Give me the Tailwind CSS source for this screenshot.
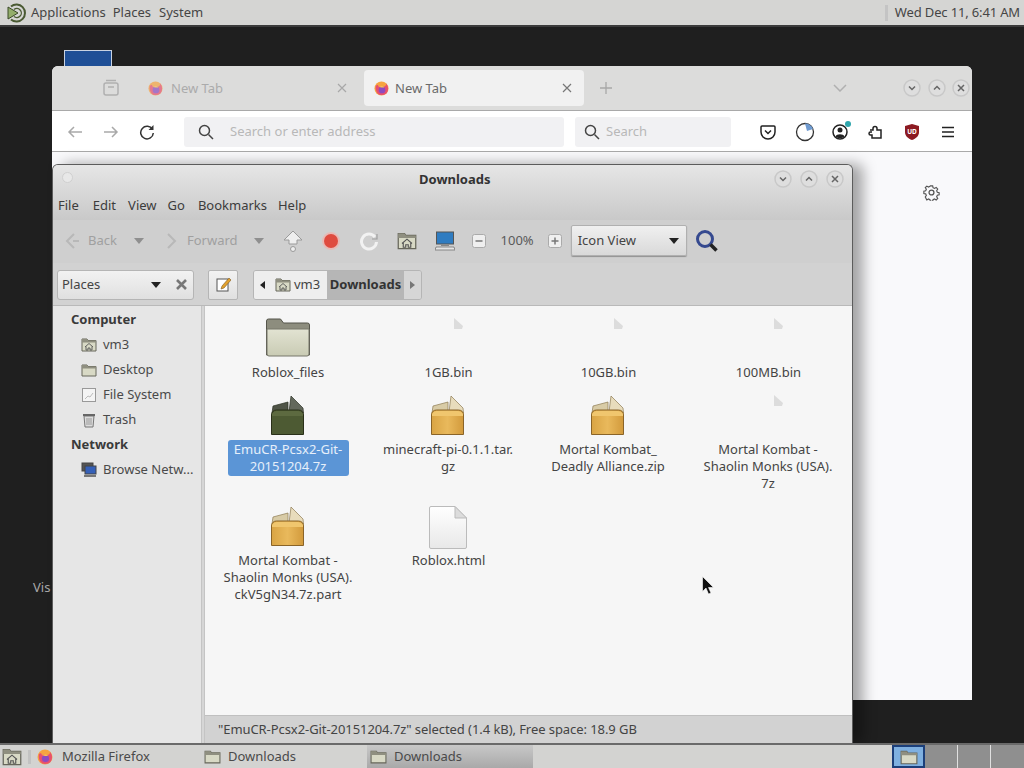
<!DOCTYPE html>
<html lang="en">
<head>
    <meta charset="UTF-8">
    <title>Downloads</title>
    <script src="https://cdn.jsdelivr.net/npm/@tailwindcss/browser@4"></script>
</head>
<body class="relative w-[1024px] h-[768px] overflow-hidden bg-[#1f1f1f] font-['Noto_Sans',sans-serif] text-[13px] text-[#3c3c3c]">

    <!-- shared icons -->
    <svg class="absolute w-0 h-0">
        <defs>
            <linearGradient id="boxfill" x1="0" y1="0" x2="1" y2="0"><stop offset="0" stop-color="#d9a444"/><stop offset=".5" stop-color="#e9b95c"/><stop offset="1" stop-color="#d29a3c"/></linearGradient>
            <linearGradient id="folderfill" x1="0" y1="0" x2="0" y2="1"><stop offset="0" stop-color="#e2e3d2"/><stop offset="1" stop-color="#c9cbb4"/></linearGradient>
            <linearGradient id="docfill" x1="0" y1="0" x2="0" y2="1"><stop offset="0" stop-color="#ffffff"/><stop offset="1" stop-color="#e8e8e8"/></linearGradient>
        </defs>
        <symbol id="fox" viewBox="0 0 16 16">
            <circle cx="8" cy="8" r="7.5" fill="#f6a440"/>
            <path d="M2 5c-1 4 1 10 6 10s7-3 7-7c0-2-1-4-2-5 0 2-1 3-3 3-2-1-4-1-5 0L4 4z" fill="#e8506e"/>
            <circle cx="8.5" cy="9.5" r="3.6" fill="#8d4bc0"/>
            <path d="M5 6c2-1 5-1 6 1-2 0-4 0-6-1z" fill="#f7c14d"/>
        </symbol>
        <symbol id="package" viewBox="0 0 33 40">
            <path d="M2 11l15-4v11H1z" fill="#d8cba6" stroke="#8d7a52" stroke-width=".7"/>
            <path d="M18 17l2-16 12 12 .5 5z" fill="#e8dcbc" stroke="#8d7a52" stroke-width=".7"/>
            <path d="M.5 20c0-3 2-5 5-5h22c3 0 5 2 5 5v19.500H.5z" fill="url(#boxfill)" stroke="#8a6428"/>
            <path d="M1 19c1-2 3-3 5-3h21c2 0 4 1 5 3v2H1z" fill="#f0c66e"/>
        </symbol>
        <symbol id="package-dark" viewBox="0 0 33 40">
            <path d="M2 11l15-4v11H1z" fill="#4f5447" stroke="#2b3024" stroke-width=".7"/>
            <path d="M18 17l2-16 12 12 .5 5z" fill="#63685c" stroke="#2b3024" stroke-width=".7"/>
            <path d="M.5 20c0-3 2-5 5-5h22c3 0 5 2 5 5v19.500H.5z" fill="#4d5a33" stroke="#2a3019"/>
            <path d="M1 19c1-2 3-3 5-3h21c2 0 4 1 5 3v2H1z" fill="#5d6a40"/>
        </symbol>
        <symbol id="blank" viewBox="0 0 10 11">
            <path d="M1 0l9 8-1 3H1z" fill="#dcdcdc"/>
        </symbol>
        <symbol id="smallfolder" viewBox="0 0 16 16">
            <path d="M1 3h5l1 1.500h8V14H1z" fill="#d8d9c5" stroke="#66665a"/>
            <path d="M1 3h5l1 1.500h8v2H1z" fill="#8f8f80"/>
        </symbol>
        <symbol id="homefolder" viewBox="0 0 16 16">
            <path d="M1 2h5l1 1.500h8V14H1z" fill="#d8d9c5" stroke="#66665a"/>
            <path d="M1 2h5l1 1.500h8v2H1z" fill="#8f8f80"/>
            <path d="M4 10l4-3.500 4 3.500M5 9.500V13h2v-2h2v2h2V9.500" fill="none" stroke="#555" stroke-width=".9"/>
        </symbol>
        <symbol id="winmin" viewBox="0 0 18 18">
            <circle cx="9" cy="9" r="8" fill="#dedede" stroke="#c8c8c8" stroke-width="1.500"/>
            <path d="M6 7.500l3 3 3-3" fill="none" stroke="#666" stroke-width="1.500"/>
        </symbol>
        <symbol id="winmax" viewBox="0 0 18 18">
            <circle cx="9" cy="9" r="8" fill="#dedede" stroke="#c8c8c8" stroke-width="1.500"/>
            <path d="M6 10.500l3-3 3 3" fill="none" stroke="#666" stroke-width="1.500"/>
        </symbol>
        <symbol id="winclose" viewBox="0 0 18 18">
            <circle cx="9" cy="9" r="8" fill="#dedede" stroke="#c8c8c8" stroke-width="1.500"/>
            <path d="M6 6l6 6M12 6l-6 6" fill="none" stroke="#666" stroke-width="1.500"/>
        </symbol>
    </svg>

    <!-- top panel -->
    <div class="absolute top-0 left-0 w-full h-[27px] bg-[#d5d5d3] border-b-2 border-[#3b3b3b] flex items-center text-[13px] text-[#454545]">
        <svg class="ml-[6px] w-[20px] h-[20px]" viewBox="0 0 20 20" fill="none">
            <path d="M5 3.500a8.500 8.500 0 1 1 0 13" stroke="#4a5a32" stroke-width="2"/>
            <path d="M8 6.500a4.500 4.500 0 1 1 0 7" stroke="#4a5a32" stroke-width="1.300"/>
            <path d="M2 4l10 6-10 6z" fill="#93ad6b" stroke="#3c4a28"/>
        </svg>
        <span class="ml-[5px]">Applications</span>
        <span class="ml-[7px]">Places</span>
        <span class="ml-[8px]">System</span>
        <div class="ml-auto mr-[7px] w-[3px] h-[16px] bg-[#c4c4c4]"></div>
        <span class="mr-[4px] tracking-[-0.15px]">Wed Dec 11, 6:41 AM</span>
    </div>

    <!-- desktop leftovers -->
    <div class="absolute left-[64px] top-[50px] w-[48px] h-[20px] bg-[#1f4f96] border border-[#c9d3e2]"></div>
    <span class="absolute left-[33px] top-[578px] text-[#a8a8a8]">Vis</span>

    <!-- firefox window -->
    <div class="absolute left-[52px] top-[66px] w-[920px] h-[634px] flex flex-col rounded-t-md overflow-hidden bg-[#f9f9fb]">
        <div class="h-[45px] shrink-0 bg-[#dcdcdb] border-b border-[#a9a9a9] flex items-center">
            <svg class="ml-[50px] w-[18px] h-[18px]" viewBox="0 0 18 18" fill="none" stroke="#b0b0b0" stroke-width="1.500">
                <rect x="2" y="4" width="14" height="12" rx="2"/><path d="M4 1.500h10M6 8h6"/>
            </svg>
            <div class="ml-[18px] w-[220px] h-[36px] flex items-center px-[10px]">
                <svg class="w-[15px] h-[15px] opacity-70"><use href="#fox"/></svg>
                <span class="ml-[8px] mt-[1px] text-[#ababab]">New Tab</span>
                <svg class="ml-auto mr-[1px] w-[10px] h-[10px]" viewBox="0 0 10 10" stroke="#a8a8a8" stroke-width="1.200"><path d="M1 1l8 8M9 1l-8 8"/></svg>
            </div>
            <div class="ml-[6px] w-[220px] h-[36px] bg-[#f1f1f1] rounded-[4px] flex items-center pl-[10px] pr-[12px]">
                <svg class="w-[15px] h-[15px]"><use href="#fox"/></svg>
                <span class="ml-[6px] mt-[1px] text-[#6a6a6a]">New Tab</span>
                <svg class="ml-auto w-[10px] h-[10px]" viewBox="0 0 10 10" stroke="#777" stroke-width="1.200"><path d="M1 1l8 8M9 1l-8 8"/></svg>
            </div>
            <svg class="ml-[16px] w-[12px] h-[12px]" viewBox="0 0 12 12" stroke="#a8a8a8" stroke-width="1.300"><path d="M6 0v12M0 6h12"/></svg>
            <svg class="ml-[221px] w-[14px] h-[8px]" viewBox="0 0 14 8" fill="none" stroke="#b0b0b0" stroke-width="1.500"><path d="M1 1l6 6 6-6"/></svg>
            <svg class="ml-[56px] w-[18px] h-[18px]"><use href="#winmin"/></svg>
            <svg class="ml-[7px] w-[18px] h-[18px]"><use href="#winmax"/></svg>
            <svg class="ml-[6px] w-[18px] h-[18px]"><use href="#winclose"/></svg>
        </div>
        <div class="h-[41px] shrink-0 bg-white border-b border-[#a9a9a9] flex items-center pt-[1px]">
            <svg class="ml-[15px] w-[16px] h-[14px]" viewBox="0 0 16 14" fill="none" stroke="#a9a9a9" stroke-width="1.500"><path d="M15 7H2M7 2L2 7l5 5"/></svg>
            <svg class="ml-[20px] w-[16px] h-[14px]" viewBox="0 0 16 14" fill="none" stroke="#a9a9a9" stroke-width="1.500"><path d="M1 7h13M9 2l5 5-5 5"/></svg>
            <svg class="ml-[20px] w-[16px] h-[16px]" viewBox="0 0 16 16" fill="none" stroke="#333" stroke-width="1.500"><path d="M13.500 5.500A6.300 6.300 0 1 0 14.300 9"/><path d="M14.500 1v5h-5" fill="#333" stroke="none"/></svg>
            <div class="ml-[29px] w-[380px] h-[30px] bg-[#f1f1f3] flex items-center rounded-[3px]">
                <svg class="ml-[14px] w-[16px] h-[16px]" viewBox="0 0 16 16" fill="none" stroke="#444" stroke-width="1.500"><circle cx="6.500" cy="6.500" r="5"/><path d="M10.500 10.500l4.500 4.500"/></svg>
                <span class="ml-[16px] text-[#b8b8b8]">Search or enter address</span>
            </div>
            <div class="ml-[11px] w-[156px] h-[30px] bg-[#f1f1f3] flex items-center rounded-[3px]">
                <svg class="ml-[9px] w-[16px] h-[16px]" viewBox="0 0 16 16" fill="none" stroke="#444" stroke-width="1.500"><circle cx="6.500" cy="6.500" r="5"/><path d="M10.500 10.500l4.500 4.500"/></svg>
                <span class="ml-[6px] text-[#b8b8b8]">Search</span>
            </div>
            <svg class="ml-[29px] w-[16px] h-[16px]" viewBox="0 0 16 16" fill="none" stroke="#222" stroke-width="1.500"><path d="M2 2h12a1 1 0 0 1 1 1v5a7 7 0 0 1-14 0V3a1 1 0 0 1 1-1z"/><path d="M5 6.500l3 3 3-3"/></svg>
            <svg class="ml-[19px] w-[20px] h-[20px]" viewBox="0 0 20 20"><circle cx="10" cy="10" r="8.500" fill="#fff" stroke="#333" stroke-width="1.300"/><path d="M10 1.500A8.500 8.500 0 0 1 18 7l-6 2z" fill="#6f9bd1"/></svg>
            <div class="relative ml-[17px] w-[16px] h-[16px]">
                <svg class="w-[16px] h-[16px]" viewBox="0 0 16 16"><circle cx="8" cy="8" r="7" fill="#fff" stroke="#222" stroke-width="1.500"/><circle cx="8" cy="6" r="2.500" fill="#222"/><path d="M3.500 12.500c1-3 8-3 9 0-2 2-7 2-9 0z" fill="#222"/></svg>
                <div class="absolute top-[-3px] right-[-3px] w-[6px] h-[6px] rounded-full bg-[#2fa6ad]"></div>
            </div>
            <svg class="ml-[20px] w-[16px] h-[16px]" viewBox="0 0 16 16" fill="none" stroke="#222" stroke-width="1.500"><path d="M2 6h3V4.500a2 2 0 1 1 4 0V6h4v8H4v-3H2.500a1.500 1.500 0 0 1 0-3H4"/></svg>
            <svg class="ml-[20px] w-[16px] h-[16px]" viewBox="0 0 16 16"><path d="M8 0l7 2v6c0 4-3 6.500-7 8-4-1.500-7-4-7-8V2z" fill="#8c1a22"/><text x="8" y="10" text-anchor="middle" font-size="6.500" font-weight="700" fill="#fff">UD</text></svg>
            <svg class="ml-[22px] w-[12px] h-[12px]" viewBox="0 0 12 12" stroke="#222" stroke-width="1.400"><path d="M0 1.500h12M0 6h12M0 10.500h12"/></svg>
        </div>
        <div class="flex-1 flex justify-end pt-[32px] pr-[32px]">
            <svg class="w-[17px] h-[17px]" viewBox="0 0 16 16" fill="none" stroke="#555" stroke-width="1.200"><circle cx="8" cy="8" r="2.300"/><path d="M6.800 1h2.400l.4 2 1.500.7 1.800-1 1.600 1.700-1.100 1.700.7 1.600 1.900.4v2.400l-1.900.4-.7 1.600 1.100 1.700-1.600 1.600-1.800-1-1.500.7-.4 1.800H6.800l-.4-1.800-1.500-.7-1.800 1L1.500 12.700l1.100-1.700-.7-1.600L0 9V6.600l1.900-.4.700-1.600-1.100-1.700L3.100 1.300l1.800 1 1.500-.7z" transform="translate(.8 .8) scale(.9)"/></svg>
        </div>
    </div>

    <!-- file manager window -->
    <div class="absolute left-[52px] top-[164px] w-[801px] h-[579px] flex flex-col rounded-t-md overflow-hidden border border-[#5c5c5c] border-b-0 bg-[#d2d2d2] shadow-[10px_0_14px_rgba(0,0,0,0.35)]">
        <div class="h-[55px] shrink-0 bg-gradient-to-b from-[#e6e6e6] to-[#c9c9c9] flex flex-col">
            <div class="h-[28px] flex items-center relative">
                <div class="ml-[9px] mb-[4px] w-[11px] h-[11px] rounded-full bg-[#e8e8e8] border border-[#d0d0d0]"></div>
                <span class="absolute left-[366px] top-[5px] font-bold text-[#333]">Downloads</span>
                <svg class="ml-auto w-[18px] h-[18px]"><use href="#winmin"/></svg>
                <svg class="ml-[8px] w-[18px] h-[18px]"><use href="#winmax"/></svg>
                <svg class="ml-[8px] mr-[8px] w-[18px] h-[18px]"><use href="#winclose"/></svg>
            </div>
            <div class="flex h-[26px] items-center pl-[5px] gap-[12px] text-[#3c3c3c]">
                <span>File</span><span class="ml-[2px]">Edit</span><span>View</span><span class="ml-[-1px]">Go</span><span class="ml-[1px]">Bookmarks</span><span class="ml-[-1px]">Help</span>
            </div>
        </div>
        <div class="h-[43px] shrink-0 bg-[#cfcfcf] flex items-center pb-[2px] text-[#a0a0a0]">
            <svg class="ml-[12px] w-[16px] h-[18px]" viewBox="0 0 16 18" fill="none" stroke="#b8b8b8" stroke-width="2"><path d="M9 2L2 9l7 7M8 9h6"/></svg>
            <span class="ml-[7px]">Back</span>
            <div class="ml-[17px] w-0 h-0 border-x-[5px] border-x-transparent border-t-[6px] border-t-[#8f8f8f]"></div>
            <svg class="ml-[20px] w-[14px] h-[18px]" viewBox="0 0 14 18" fill="none" stroke="#b8b8b8" stroke-width="2"><path d="M4 2l7 7-7 7"/></svg>
            <span class="ml-[9px]">Forward</span>
            <div class="ml-[16px] w-0 h-0 border-x-[5px] border-x-transparent border-t-[6px] border-t-[#8f8f8f]"></div>
            <svg class="ml-[19px] w-[20px] h-[24px]" viewBox="0 0 20 24" fill="#eee" stroke="#9a9a9a"><path d="M10 2l9 9h-5v4H6v-4H1z"/><circle cx="10" cy="20" r="2.500"/></svg>
            <svg class="ml-[18px] w-[20px] h-[20px]" viewBox="0 0 20 20"><circle cx="10" cy="10" r="9" fill="#e9b9b5"/><circle cx="10" cy="10" r="7" fill="#df4b3f"/></svg>
            <svg class="ml-[18px] w-[20px] h-[20px]" viewBox="0 0 20 20" fill="none" stroke="#f2f2f2" stroke-width="3"><path d="M16 6a7.500 7.500 0 1 0 1.500 5"/><path d="M18 3v5h-5" stroke="#9f9f9f" stroke-width="1.200"/></svg>
            <svg class="ml-[18px] w-[20px] h-[20px]"><use href="#homefolder"/></svg>
            <svg class="ml-[18px] w-[20px] h-[20px]" viewBox="0 0 20 20"><rect x="1.500" y="1" width="17" height="12" fill="#2f7cc1" stroke="#555"/><path d="M6 13.500h8v1.500H6z" fill="#888"/><path d="M1 16h18l1 3H0z" fill="#e4e4e4" stroke="#666" stroke-width=".7"/></svg>
            <svg class="ml-[17px] w-[14px] h-[14px]" viewBox="0 0 14 14"><rect x=".5" y=".5" width="13" height="13" rx="2" fill="#efefef" stroke="#aaa"/><path d="M3.500 7h7" stroke="#777" stroke-width="1.500"/></svg>
            <span class="ml-[15px] text-[#5a5a5a]">100%</span>
            <svg class="ml-[14px] w-[14px] h-[14px]" viewBox="0 0 14 14"><rect x=".5" y=".5" width="13" height="13" rx="2" fill="#efefef" stroke="#aaa"/><path d="M3.500 7h7M7 3.500v7" stroke="#777" stroke-width="1.500"/></svg>
            <div class="ml-[9px] w-[116px] h-[31px] bg-gradient-to-b from-[#f0f0f0] to-[#d9d9d9] border border-[#b0b0b0] rounded-[2px] flex items-center pl-[6px] text-[#444] shadow-[0_1px_1px_rgba(0,0,0,0.3)]">
                <span>Icon View</span>
                <div class="ml-auto mr-[7px] w-0 h-0 border-x-[5px] border-x-transparent border-t-[6px] border-t-[#222]"></div>
            </div>
            <svg class="ml-[8px] w-[24px] h-[24px]" viewBox="0 0 24 24" fill="none"><circle cx="10" cy="10" r="7.500" stroke="#35498f" stroke-width="3"/><path d="M15.500 15.500l6 6" stroke="#222" stroke-width="3.500"/></svg>
        </div>
        <div class="h-[43px] shrink-0 bg-[#d2d2d2] border-b border-[#b9b9b9] flex items-center pt-[1px]">
            <div class="ml-[4px] w-[137px] h-[30px] bg-gradient-to-b from-[#f2f2f2] to-[#e0e0e0] border border-[#b5b5b5] rounded-[3px] flex items-center pl-[4px] text-[#444]">
                <span>Places</span>
                <div class="ml-[51px] w-0 h-0 border-x-[5px] border-x-transparent border-t-[6px] border-t-[#222]"></div>
                <svg class="ml-[15px] w-[11px] h-[11px]" viewBox="0 0 11 11" stroke="#777" stroke-width="2.600"><path d="M1 1l9 9M10 1l-9 9"/></svg>
            </div>
            <div class="ml-[14px] w-[30px] h-[30px] bg-gradient-to-b from-[#f2f2f2] to-[#e0e0e0] border border-[#b5b5b5] rounded-[2px] flex items-center justify-center">
                <svg class="w-[15px] h-[15px]" viewBox="0 0 15 15"><rect x="1" y="2" width="11" height="12" fill="#fff" stroke="#555"/><path d="M13 1L6 9l-1 3 3-1 7-8z" fill="#e2a12e" stroke="#7d5a22" stroke-width=".6"/></svg>
            </div>
            <div class="ml-[15px] h-[30px] flex items-stretch border border-[#b5b5b5] rounded-[3px] overflow-hidden">
                <div class="w-[73px] bg-[#eeeeee] flex items-center">
                    <div class="ml-[6px] w-0 h-0 border-y-[4px] border-y-transparent border-r-[5px] border-r-[#222]"></div>
                    <svg class="ml-[10px] w-[16px] h-[16px]"><use href="#homefolder"/></svg>
                    <span class="ml-[3px] text-[#444]">vm3</span>
                </div>
                <div class="w-[77px] bg-[#b6b6b6] flex items-center justify-center font-bold text-[#333]">Downloads</div>
                <div class="w-[17px] bg-[#d6d6d6] flex items-center justify-center">
                    <div class="w-0 h-0 border-y-[4px] border-y-transparent border-l-[5px] border-l-[#777]"></div>
                </div>
            </div>
        </div>
        <div class="flex-1 flex min-h-0">
            <div class="w-[148px] shrink-0 bg-[#e6e6e6] flex flex-col pt-[1px] text-[#4a4a4a]">
                <div class="h-[25px] pl-[18px] flex items-center font-bold text-[#3a3a3a]">Computer</div>
                <div class="h-[25px] pl-[28px] flex items-center gap-[6px]"><svg class="w-[16px] h-[16px]"><use href="#homefolder"/></svg>vm3</div>
                <div class="h-[25px] pl-[28px] flex items-center gap-[6px]"><svg class="w-[16px] h-[16px]"><use href="#smallfolder"/></svg>Desktop</div>
                <div class="h-[25px] pl-[28px] flex items-center gap-[6px]"><svg class="w-[16px] h-[16px]" viewBox="0 0 16 16"><rect x="1.500" y="1.500" width="13" height="13" fill="#f4f4f4" stroke="#999"/><path d="M4 12l3-3 2 1 3-4" fill="none" stroke="#bbb"/></svg>File System</div>
                <div class="h-[25px] pl-[28px] flex items-center gap-[6px]"><svg class="w-[16px] h-[16px]" viewBox="0 0 16 16"><path d="M3 4h10l-1 11H4z" fill="#dcdcdc" stroke="#777"/><path d="M2 3h12" stroke="#666" stroke-width="2"/><path d="M6 6v7M8 6v7M10 6v7" stroke="#999"/></svg>Trash</div>
                <div class="h-[25px] pl-[18px] flex items-center font-bold text-[#3a3a3a]">Network</div>
                <div class="h-[25px] pl-[28px] flex items-center gap-[6px] whitespace-nowrap"><svg class="w-[16px] h-[16px]" viewBox="0 0 16 16"><rect x="1" y="1" width="11" height="8" fill="#555" stroke="#444"/><rect x="4" y="4" width="11" height="8" fill="#3560b8" stroke="#444"/><path d="M3 14h12" stroke="#777" stroke-width="2"/></svg>Browse Netw...</div>
            </div>
            <div class="w-[4px] shrink-0 bg-[#d6d6d6] border-x border-[#c4c4c4]"></div>
            <div class="flex-1 flex flex-col min-w-0">
                <div class="flex-1 bg-[#f6f6f6] pl-[3px] pt-[12px] grid grid-cols-[repeat(4,160px)] content-start gap-y-[14px] text-center leading-[17px] text-[#444]">
                    <div class="flex flex-col items-center">
                        <div class="h-[46px]">
                            <svg class="w-[44px] h-[39px]" viewBox="0 0 44 39"><path d="M.5 3a2 2 0 0 1 2-2h12l3 4h24a2 2 0 0 1 2 2v30H.5z" fill="#8d8d7e" stroke="#55554b"/><path d="M1 11h42v25a2 2 0 0 1-2 2H3a2 2 0 0 1-2-2z" fill="url(#folderfill)" stroke="#77776a"/></svg>
                        </div>
                        <span>Roblox_files</span>
                    </div>
                    <div class="flex flex-col items-center">
                        <div class="h-[46px]"><svg class="ml-[20px] w-[10px] h-[11px]"><use href="#blank"/></svg></div>
                        <span class="ml-[1px]">1GB.bin</span>
                    </div>
                    <div class="flex flex-col items-center">
                        <div class="h-[46px]"><svg class="ml-[20px] w-[10px] h-[11px]"><use href="#blank"/></svg></div>
                        <span class="ml-[1px]">10GB.bin</span>
                    </div>
                    <div class="flex flex-col items-center">
                        <div class="h-[46px]"><svg class="ml-[20px] w-[10px] h-[11px]"><use href="#blank"/></svg></div>
                        <span class="ml-[1px]">100MB.bin</span>
                    </div>
                    <div class="flex flex-col items-center">
                        <div class="h-[46px]"><svg class="mr-[1px] w-[33px] h-[40px]"><use href="#package-dark"/></svg></div>
                        <span class="w-[121px] h-[36px] mt-[-1px] bg-[#5b95d6] rounded-[3px] text-[#e6effa] whitespace-nowrap pt-[1px]">EmuCR-Pcsx2-Git-<br>20151204.7z</span>
                    </div>
                    <div class="flex flex-col items-center">
                        <div class="h-[46px]"><svg class="mr-[1px] w-[33px] h-[40px]"><use href="#package"/></svg></div>
                        <span class="whitespace-nowrap">minecraft-pi-0.1.1.tar.<br>gz</span>
                    </div>
                    <div class="flex flex-col items-center">
                        <div class="h-[46px]"><svg class="mr-[1px] w-[33px] h-[40px]"><use href="#package"/></svg></div>
                        <span class="whitespace-nowrap">Mortal Kombat_<br>Deadly Alliance.zip</span>
                    </div>
                    <div class="flex flex-col items-center">
                        <div class="h-[46px]"><svg class="ml-[20px] w-[10px] h-[11px]"><use href="#blank"/></svg></div>
                        <span class="whitespace-nowrap">Mortal Kombat -<br>Shaolin Monks (USA).<br>7z</span>
                    </div>
                    <div class="flex flex-col items-center">
                        <div class="h-[46px]"><svg class="mr-[1px] w-[33px] h-[40px]"><use href="#package"/></svg></div>
                        <span class="whitespace-nowrap">Mortal Kombat -<br>Shaolin Monks (USA).<br>ckV5gN34.7z.part</span>
                    </div>
                    <div class="flex flex-col items-center">
                        <div class="h-[46px]">
                            <svg class="w-[38px] h-[43px]" viewBox="0 0 38 43"><path d="M2 .5h24L37.500 12v29a1.500 1.500 0 0 1-1.500 1.500H2A1.500 1.500 0 0 1 .5 41V2A1.500 1.500 0 0 1 2 .5z" fill="url(#docfill)" stroke="#bbb"/><path d="M26 .5V12h11.500z" fill="#dcdcdc" stroke="#bbb"/></svg>
                        </div>
                        <span class="ml-[1px]">Roblox.html</span>
                    </div>
                </div>
                <div class="h-[28px] shrink-0 bg-[#d2d2d2] border-t border-[#c0c0c0] flex items-center pl-[13px] tracking-[-0.07px] text-[#444]">"EmuCR-Pcsx2-Git-20151204.7z" selected (1.4 kB), Free space: 18.9 GB</div>
            </div>
        </div>
    </div>

    <!-- cursor -->
    <svg class="absolute left-[702px] top-[576px] w-[12px] h-[19px]" viewBox="0 0 12 19"><path d="M.5.500v15l3.500-3.500 2.500 6 2.500-1-2.500-5.500h5z" fill="#111" stroke="#fff" stroke-width=".6"/></svg>

    <!-- bottom panel -->
    <div class="absolute left-0 bottom-0 w-full h-[25px] bg-[#d3d3d1] border-t-2 border-[#6a6a6a] flex items-center text-[#4a4a4a]">
        <svg class="ml-[2px] w-[20px] h-[20px]"><use href="#homefolder"/></svg>
        <div class="ml-[6px] w-[3px] h-[14px] bg-[#c2c2c2]"></div>
        <div class="ml-[6px] w-[167px] h-full flex items-center">
            <svg class="w-[16px] h-[16px]"><use href="#fox"/></svg>
            <span class="ml-[9px]">Mozilla Firefox</span>
        </div>
        <div class="w-[163px] h-full flex items-center">
            <svg class="w-[17px] h-[17px]"><use href="#smallfolder"/></svg>
            <span class="ml-[7px]">Downloads</span>
        </div>
        <div class="w-[166px] h-full flex items-center bg-gradient-to-b from-[#c8c8c8] to-[#a9a9a9] pl-[3px]">
            <svg class="w-[17px] h-[17px]"><use href="#smallfolder"/></svg>
            <span class="ml-[7px]">Downloads</span>
        </div>
        <div class="ml-auto w-[33px] h-full bg-[#1c3f7a] p-[2px] flex items-center justify-center">
            <div class="w-full h-full bg-[#7fb0e0] flex items-end justify-center">
                <svg class="w-[22px] h-[18px]"><use href="#smallfolder"/></svg>
            </div>
        </div>
        <div class="w-[33px] h-full bg-[#8f8f8f] border-r border-[#e0e0e0]"></div>
        <div class="w-[33px] h-full bg-[#8f8f8f] border-r border-[#e0e0e0]"></div>
        <div class="w-[33px] h-full bg-[#8f8f8f]"></div>
    </div>
</body>
</html>
